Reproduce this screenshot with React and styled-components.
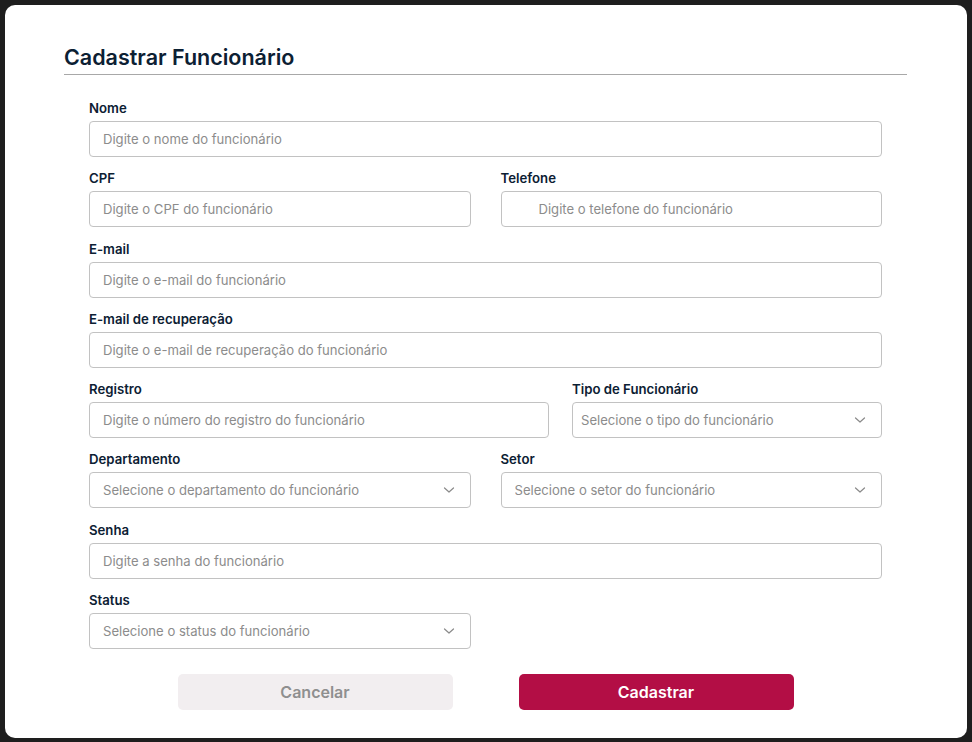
import { createGlobalStyle } from 'styled-components'
import styled from 'styled-components'

const GlobalStyle = createGlobalStyle`
    html, body {
        margin: 0;
        padding: 0;
        background: #1e1e1e;
    }
    body {
        font-family: Inter, "Noto Sans", sans-serif;
    }
    * {
        box-sizing: border-box;
    }
`

function Chevron() {
    return (
        <svg width="12" height="8" viewBox="0 0 12 8" fill="none">
            <path d="M1.5 2 L6 6 L10.5 2" stroke="#8a8a8a" strokeWidth="1.2" strokeLinecap="round" strokeLinejoin="round" />
        </svg>
    )
}

function TextField({ label, placeholder, indent }) {
    return (
        <Field>
            <Label>{label}</Label>
            <Input placeholder={placeholder} $indent={indent} />
        </Field>
    )
}

function SelectField({ label, placeholder, tight }) {
    return (
        <Field>
            <Label>{label}</Label>
            <SelectBox>
                <Select defaultValue="" $tight={tight}>
                    <option value="" disabled>{placeholder}</option>
                </Select>
                <ChevronWrap><Chevron /></ChevronWrap>
            </SelectBox>
        </Field>
    )
}

function App() {
    return (
        <>
            <GlobalStyle />
            <Page>
                <Card>
                    <Title>Cadastrar Funcionário</Title>
                    <Form onSubmit={(e) => e.preventDefault()}>
                        <Row>
                            <TextField label="Nome" placeholder="Digite o nome do funcionário" />
                        </Row>
                        <Row $cols="1fr 1fr">
                            <TextField label="CPF" placeholder="Digite o CPF do funcionário" />
                            <TextField label="Telefone" placeholder="Digite o telefone do funcionário" indent />
                        </Row>
                        <Row>
                            <TextField label="E-mail" placeholder="Digite o e-mail do funcionário" />
                        </Row>
                        <Row>
                            <TextField label="E-mail de recuperação" placeholder="Digite o e-mail de recuperação do funcionário" />
                        </Row>
                        <Row $cols="1fr 310px" $gap="23px">
                            <TextField label="Registro" placeholder="Digite o número do registro do funcionário" />
                            <SelectField label="Tipo de Funcionário" placeholder="Selecione o tipo do funcionário" tight />
                        </Row>
                        <Row $cols="1fr 1fr">
                            <SelectField label="Departamento" placeholder="Selecione o departamento do funcionário" />
                            <SelectField label="Setor" placeholder="Selecione o setor do funcionário" />
                        </Row>
                        <Row>
                            <TextField label="Senha" placeholder="Digite a senha do funcionário" />
                        </Row>
                        <Row $cols="1fr 1fr">
                            <SelectField label="Status" placeholder="Selecione o status do funcionário" />
                        </Row>
                        <Actions>
                            <Button type="button" $variant="cancel">Cancelar</Button>
                            <Button type="submit">Cadastrar</Button>
                        </Actions>
                    </Form>
                </Card>
            </Page>
        </>
    )
}

const Page = styled.div`
    width: 972px;
    height: 742px;
    padding: 5px 5px 4px 5px;
`

const Card = styled.div`
    width: 962px;
    height: 733px;
    background: #ffffff;
    border-radius: 10px;
    padding: 40px 60px 0 59px;
`

const Title = styled.h1`
    margin: 0;
    padding-bottom: 4px;
    border-bottom: 1px solid #a8a8a8;
    font-size: 21.5px;
    line-height: 25px;
    font-weight: 600;
    color: #0c2033;
`

const Form = styled.form`
    display: flex;
    flex-direction: column;
    gap: 13.3px;
    margin: 25px 25px 0 25px;
`

const Row = styled.div`
    display: grid;
    grid-template-columns: ${p => p.$cols || '1fr'};
    column-gap: ${p => p.$gap || '30px'};
`

const Field = styled.div`
    display: flex;
    flex-direction: column;
    gap: 5px;
    min-width: 0;
`

const Label = styled.label`
    font-size: 13.2px;
    line-height: 16px;
    font-weight: 600;
    color: #0c2033;
`

const Input = styled.input`
    height: 36px;
    width: 100%;
    border: 1px solid #c2c2c2;
    border-radius: 4px;
    padding: 0 14px 0 ${p => (p.$indent ? '37px' : '13px')};
    font-family: inherit;
    font-size: 13.1px;
    color: #333;
    outline: none;

    &::placeholder {
        color: #8c8c8c;
    }
`

const SelectBox = styled.div`
    position: relative;
    height: 36px;
`

const Select = styled.select`
    appearance: none;
    width: 100%;
    height: 36px;
    border: 1px solid #c2c2c2;
    border-radius: 4px;
    background: #ffffff;
    padding: 0 40px 0 ${p => (p.$tight ? '8px' : '13px')};
    font-family: inherit;
    font-size: 13.1px;
    color: #8c8c8c;
    outline: none;
`

const ChevronWrap = styled.span`
    position: absolute;
    right: 16px;
    top: 14px;
    display: flex;
    pointer-events: none;
`

const Actions = styled.div`
    display: flex;
    justify-content: center;
    gap: 66px;
    margin-top: 12px;
`

const Button = styled.button`
    width: 275px;
    height: 36px;
    border: none;
    border-radius: 5px;
    font-family: inherit;
    font-size: 16px;
    font-weight: 600;
    cursor: pointer;
    background: ${p => (p.$variant === 'cancel' ? '#f2eef0' : '#b30e45')};
    color: ${p => (p.$variant === 'cancel' ? '#8f8f8f' : '#ffffff')};
`

export default App
